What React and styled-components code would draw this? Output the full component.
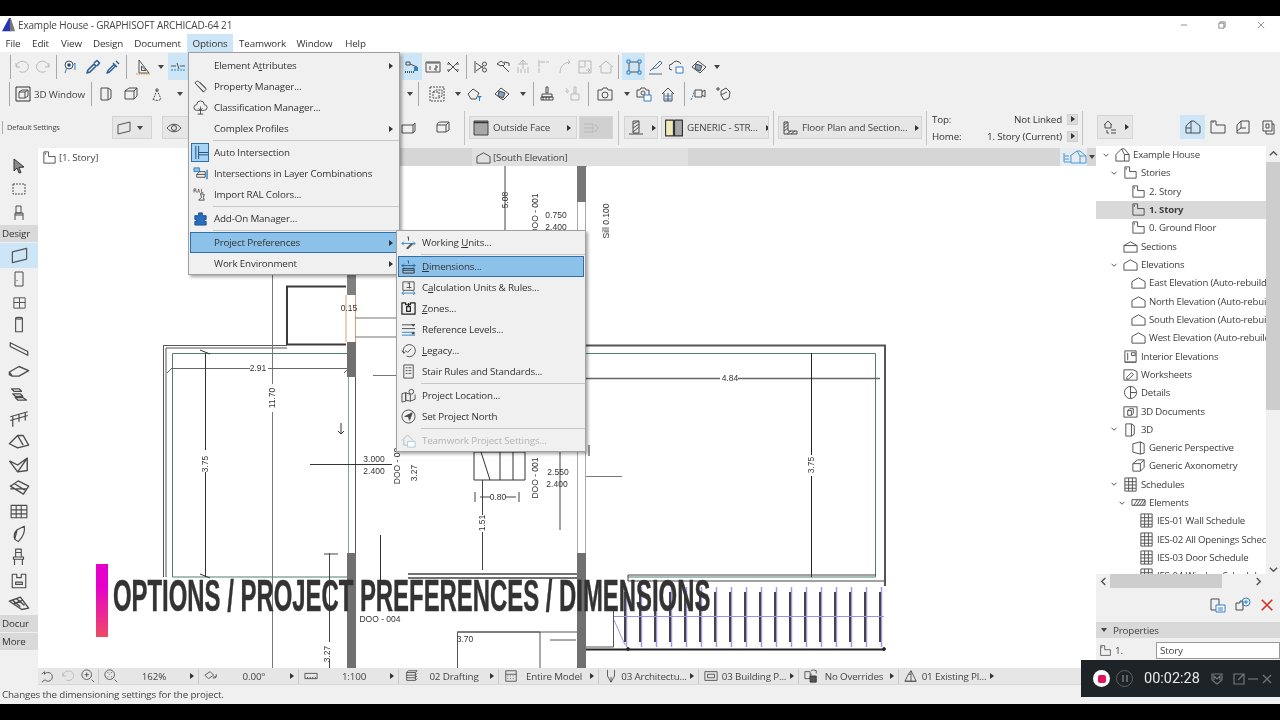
import React from 'react';
import styled, { createGlobalStyle } from 'styled-components';

const UI_FONT = '"Open Sans", "Noto Sans", sans-serif';
const BLUE = '#2f80c8';
const GRAY = '#b9b9b9';

const GlobalStyle = createGlobalStyle`
  html, body {
    margin: 0;
    background: #000;
    overflow: hidden;
  }
  * {
    box-sizing: border-box;
  }
`;

const Screen = styled.div`
  position: relative;
  width: 1280px;
  height: 720px;
  padding: 16px 0;
  background: #000;
  overflow: hidden;
  font-family: ${UI_FONT};
  font-size: 9.8px;
  letter-spacing: -0.16px;
  color: #333;
  filter: blur(0.3px);
`;

const Frame = styled.div`
  display: flex;
  flex-direction: column;
  height: 688px;
  background: #f0f0f0;
`;

const TitleBar = styled.div`
  display: flex;
  align-items: center;
  height: 18px;
  padding-left: 2px;
  background: #fff;
  font-size: 10px;
  color: #444;
`;

const TitleText = styled.span`
  margin-left: 2px;
  flex: 1;
`;

const WinButton = styled.span`
  display: flex;
  justify-content: center;
  width: 38.5px;
  color: #666;
`;

const MenuBar = styled.div`
  display: flex;
  height: 18px;
  background: #fff;
`;

const MenuLabel = styled.span`
  display: flex;
  align-items: center;
  width: ${(p) => p.$w}px;
  justify-content: center;
  background: ${(p) => (p.$open ? '#cde6f7' : 'transparent')};
  color: #333;
`;

const ToolRow = styled.div`
  display: flex;
  align-items: center;
  flex: none;
  height: ${(p) => p.$h}px;
  padding-left: ${(p) => p.$pad}px;
`;

const Tool = styled.span`
  display: flex;
  align-items: center;
  justify-content: center;
  flex: none;
  width: ${(p) => p.$w}px;
  height: ${(p) => (p.$hl ? '27px' : 'auto')};
  background: ${(p) => (p.$hl ? '#cde6f7' : 'transparent')};
`;

const Sep = styled.span`
  flex: none;
  width: ${(p) => p.$w}px;
  height: 24px;
  background: linear-gradient(#a8a8a8, #a8a8a8) center / 1px 100% no-repeat;
`;

const Caret = styled.span`
  flex: none;
  display: flex;
  justify-content: center;
  width: ${(p) => p.$w}px;
  &::after {
    content: '';
    border-left: 3px solid transparent;
    border-right: 3px solid transparent;
    border-top: 4px solid #444;
  }
`;

const Arrow = styled.span`
  flex: none;
  width: 0;
  height: 0;
  border-top: 3.5px solid transparent;
  border-bottom: 3.5px solid transparent;
  border-left: 4px solid #333;
`;

const Body = styled.div`
  display: flex;
  flex: 1;
  min-height: 0;
`;

const LeftColumn = styled.div`
  display: flex;
  flex-direction: column;
  width: 1096px;
`;

const InfoBox = styled.div`
  display: flex;
  align-items: center;
  height: 41px;
  flex: none;
`;

const InfoLabel = styled.span`
  width: 110px;
  margin-left: 2px;
  padding-left: 4px;
  border-left: 1px solid #aaa;
  font-size: 7.5px;
  line-height: 13px;
  color: #444;
`;

const InfoSep = styled.span`
  flex: none;
  width: 1px;
  height: 34px;
  margin: 0 ${(p) => p.$m}px;
  background: #c4c4c4;
`;

const InfoButton = styled.span`
  display: flex;
  align-items: center;
  gap: 4px;
  flex: none;
  width: ${(p) => p.$w}px;
  height: 23px;
  margin-right: ${(p) => p.$mr || 0}px;
  padding: 0 5px 0 3px;
  border: 1px solid #d4d4d4;
  background: ${(p) => (p.$off ? '#d0d0d0' : '#e6e6e6')};
  white-space: nowrap;
  overflow: hidden;
  color: #444;
`;

const Grow = styled.span`
  flex: 1;
`;

const InfoSpacer = styled.span`
  flex: none;
  display: flex;
  align-items: center;
  justify-content: flex-end;
  width: ${(p) => p.$w}px;
`;

const StoryBlock = styled.div`
  display: grid;
  grid-template-columns: 40px 95px 11px;
  row-gap: 4px;
  align-items: center;
  width: 147px;
  flex: none;
  padding-left: 1px;
`;

const StoryValue = styled.span`
  text-align: right;
  padding-right: 5px;
  white-space: nowrap;
`;

const SmallBox = styled.span`
  display: flex;
  align-items: center;
  justify-content: center;
  width: 11px;
  height: 11px;
  background: #dcdcdc;
  border: 1px solid #cfcfcf;
`;

const TabBar = styled.div`
  display: flex;
  height: 18px;
  flex: none;
  background: #d6d6d6;
`;

const Tab = styled.div`
  display: flex;
  align-items: center;
  gap: 2px;
  width: ${(p) => p.$w}px;
  padding-left: ${(p) => p.$pad || 0}px;
  background: ${(p) => p.$bg};
  color: #444;
`;

const TabTools = styled.div`
  display: flex;
  align-items: center;
  justify-content: center;
  gap: 2px;
  margin-left: auto;
  width: 36px;
  padding-left: 2px;
  background: linear-gradient(90deg, #e6ecf2 75%, #d6d6d6 75%);
`;

const MapGlyph = styled.svg`
  display: block;
  flex: none;
  width: 24px;
  height: 14px;
  fill: none;
  stroke: #4a98d6;
`;

const Workspace = styled.div`
  display: flex;
  flex: 1;
  min-height: 0;
`;

const Toolbox = styled.div`
  display: flex;
  flex-direction: column;
  flex: none;
  width: 38px;
  padding-top: 6px;
`;

const ToolSlot = styled.span`
  display: flex;
  align-items: center;
  justify-content: center;
  flex: none;
  height: ${(p) => p.$h}px;
  background: ${(p) => (p.$hl ? '#cde6f7' : 'transparent')};
`;

const GroupLabel = styled.span`
  display: flex;
  align-items: center;
  flex: none;
  height: 17px;
  margin-bottom: 1px;
  padding-left: 2px;
  background: #d9d9d9;
  overflow: hidden;
  white-space: nowrap;
  color: #333;
`;

const CanvasColumn = styled.div`
  display: flex;
  flex-direction: column;
  flex: 1;
  min-width: 0;
`;

const Canvas = styled.div`
  flex: 1;
  min-height: 0;
  background: #fff;
  & > svg {
    display: block;
  }
`;

const ViewBar = styled.div`
  display: flex;
  align-items: center;
  flex: none;
  height: 17px;
  background: #e6e6e6;
  border-bottom: 1px solid #d8d8d8;
`;

const ViewTools = styled.div`
  display: flex;
  align-items: center;
  justify-content: space-around;
  flex: none;
  width: 60px;
`;

const ViewItem = styled.div`
  display: flex;
  align-items: center;
  justify-content: space-between;
  flex: none;
  width: 100px;
  height: 15px;
  padding: 0 4px 0 5px;
  border-left: 1px solid #c8c8c8;
  white-space: nowrap;
  color: #444;
`;

const ViewValue = styled.span`
  flex: 1;
  text-align: center;
`;

const HintBar = styled.div`
  display: flex;
  align-items: center;
  flex: none;
  height: 19px;
  padding-left: 2px;
  color: #444;
`;

const RightPanel = styled.div`
  display: flex;
  flex-direction: column;
  width: 184px;
  flex: none;
`;

const PanelTabs = styled.div`
  display: flex;
  align-items: center;
  height: 39px;
  flex: none;
  padding: 0 0 0 1px;
`;

const MapButton = styled.span`
  display: flex;
  align-items: center;
  justify-content: center;
  gap: 7px;
  width: 36px;
  height: 24px;
  margin-right: 47px;
  background: #e6e6e6;
  border: 1px solid #d6d6d6;
`;

const PanelTab = styled.span`
  display: flex;
  align-items: center;
  justify-content: center;
  width: 25px;
  height: 24px;
  background: ${(p) => (p.$hl ? '#cde6f7' : 'transparent')};
`;

const TreeArea = styled.div`
  display: flex;
  height: 428px;
  flex: none;
`;

const Tree = styled.div`
  width: 170px;
  flex: none;
  background: #fff;
  overflow: hidden;
  font-size: 9.6px;
  letter-spacing: -0.2px;
`;

const TreeRow = styled.div`
  display: flex;
  align-items: center;
  height: 18.32px;
  padding-left: ${(p) => 5 + p.$level * 8}px;
  padding-bottom: 1px;
  background: ${(p) => (p.$selected ? '#d9d9d9' : 'transparent')};
  font-weight: ${(p) => (p.$selected ? 700 : 400)};
  white-space: nowrap;
  color: #3d3d3d;
`;

const Chevron = styled.span`
  display: flex;
  flex: none;
  width: 10px;
  color: #444;
`;

const TreeIcon = styled.span`
  display: flex;
  align-items: center;
  justify-content: center;
  flex: none;
  width: 22px;
`;

const VScroll = styled.div`
  display: flex;
  flex-direction: column;
  align-items: center;
  width: 14px;
  flex: none;
  padding-top: 3px;
`;

const VThumb = styled.div`
  width: 14px;
  height: 248px;
  margin: 4px 0 auto;
  background: #cdcdcd;
`;

const ScrollGlyph = styled.svg`
  display: block;
  flex: none;
  width: 9px;
  height: 9px;
  fill: none;
  stroke: #555;
  stroke-width: 1.6;
`;

const HScroll = styled.div`
  display: flex;
  align-items: center;
  width: 170px;
  height: 14px;
  flex: none;
  padding: 0 3px;
`;

const HThumb = styled.div`
  width: 112px;
  height: 14px;
  margin: 0 auto 0 2px;
  background: #cdcdcd;
`;

const PanelActions = styled.div`
  display: flex;
  align-items: center;
  justify-content: flex-end;
  gap: 9px;
  height: 34px;
  flex: none;
  padding-right: 6px;
`;

const PanelHeader = styled.div`
  display: flex;
  align-items: center;
  gap: 6px;
  height: 16px;
  flex: none;
  padding-left: 5px;
  background: #d9d9d9;
  color: #444;
`;

const PropertyRow = styled.div`
  display: flex;
  align-items: center;
  height: 20px;
  margin-top: 2px;
  flex: none;
  padding-left: 3px;
  color: #444;
`;

const PropertyIndex = styled.span`
  width: 44px;
  padding-left: 3px;
`;

const PropertyInput = styled.span`
  display: flex;
  align-items: center;
  width: 124px;
  height: 17px;
  padding-left: 3px;
  background: #fff;
  border: 1px solid #9a9a9a;
`;

const DropMenu = styled.div`
  position: absolute;
  left: ${(p) => p.$x}px;
  top: ${(p) => p.$y}px;
  width: ${(p) => p.$w}px;
  padding-top: ${(p) => p.$top}px;
  background: #f0f0f0;
  border: 1px solid #a0a0a0;
  box-shadow: 2px 2px 3px rgba(0, 0, 0, 0.35);
  color: #333;
`;

const MenuRow = styled.div`
  display: flex;
  align-items: center;
  height: 21px;
  margin: 0 1px;
  padding-right: 4px;
  border: 1px solid ${(p) => (p.$hl ? '#2f6fa8' : 'transparent')};
  background: ${(p) => (p.$hl ? '#8cc2ea' : 'transparent')};
  color: ${(p) => (p.$off ? '#b4b4b4' : '#333')};
`;

const MenuIcon = styled.span`
  display: flex;
  align-items: center;
  justify-content: center;
  flex: none;
  width: 18px;
  height: 19px;
  margin-right: 5px;
  background: ${(p) => (p.$on ? '#a9d3f2' : 'transparent')};
  border: 1px solid ${(p) => (p.$on ? '#2f6fa8' : 'transparent')};
`;

const MenuText = styled.span`
  flex: 1;
  white-space: nowrap;
`;

const MenuRule = styled.div`
  height: 3px;
  margin-left: 24px;
  background: linear-gradient(#c6c6c6, #c6c6c6) center / 100% 1px no-repeat;
`;

const CaptionBar = styled.div`
  position: absolute;
  left: 96px;
  top: 564px;
  width: 12px;
  height: 73px;
  background: linear-gradient(#e600cc 30%, #ee4a66);
`;

const CaptionText = styled.div`
  position: absolute;
  left: 113px;
  top: 578px;
  font-family: "Liberation Sans", sans-serif;
  font-weight: 700;
  font-size: 44px;
  line-height: 36px;
  letter-spacing: 0;
  color: #333;
  white-space: nowrap;
  -webkit-text-stroke: 0.5px #333;
  transform: scaleX(0.543);
  transform-origin: left center;
`;

const Recorder = styled.div`
  position: absolute;
  left: 1081px;
  top: 660px;
  display: flex;
  align-items: center;
  width: 199px;
  height: 37px;
  padding-left: 12px;
  background: #1e2327;
`;

const RecordDot = styled.span`
  display: flex;
  align-items: center;
  justify-content: center;
  flex: none;
  width: 17px;
  height: 17px;
  border-radius: 50%;
  background: #fff;
  &::after {
    content: '';
    width: 8px;
    height: 8px;
    border-radius: 2px;
    background: #e0145a;
  }
`;

const PauseDot = styled.span`
  display: flex;
  align-items: center;
  justify-content: center;
  gap: 2px;
  flex: none;
  width: 17px;
  height: 17px;
  margin-left: 6px;
  border-radius: 50%;
  border: 1.5px solid #5b6268;
  &::before,
  &::after {
    content: '';
    width: 2px;
    height: 7px;
    background: #5b6268;
  }
`;

const RecorderTime = styled.span`
  margin-left: 11px;
  font-family: Roboto, sans-serif;
  font-size: 14.5px;
  letter-spacing: 0;
  color: #e8e8e8;
`;

const RecorderIcons = styled.span`
  display: flex;
  align-items: center;
  margin-left: ${(p) => p.$ml}px;
  & svg {
    display: block;
    fill: none;
    stroke: #6f767c;
    stroke-width: 1.2;
  }
`;

const IconSvg = styled.svg`
  display: block;
  flex: none;
  width: ${(p) => p.$size}px;
  height: ${(p) => p.$size}px;
  fill: none;
  stroke: #4d4d4d;
  stroke-width: 1;
  stroke-linejoin: round;
`;

const ICONS = {
  undo: <path stroke={GRAY} d="M2 4v4h4M2.500 8a6 5.500 0 1 1 3 4.500" />,
  redo: <path stroke={GRAY} d="M14 4v4h-4M13.500 8a6 5.500 0 1 0-3 4.500" />,
  find: (
    <>
      <circle cx="6" cy="6" r="4" />
      <circle cx="6" cy="6" r="1.800" fill="#1c4e80" stroke="none" />
      <path d="M3.500 9.500L2 14M12 4v7M10.500 5.500L12 4" stroke={BLUE} />
    </>
  ),
  eyedrop: <path stroke="#2a5f93" strokeWidth="1.600" d="M2 14l1-3 6-6 2 2-6 6zM9 4l3-2.500 2.500 2.500L12 7" />,
  syringe: <path stroke="#2a5f93" strokeWidth="1.400" d="M2 14l2.500-1 6-6-1.500-1.500-6 6zM8 4l4 4M11 2l3 3" />,
  setsquare: (
    <>
      <path d="M4 1v13h10z" stroke="#555" />
      <path d="M6.500 7v4.500H11z" />
      <path d="M1 15h14" stroke="#d9892c" strokeDasharray="1.500 1" />
    </>
  ),
  guide: (
    <>
      <path d="M1 7h5M10 7h5" stroke="#555" />
      <path d="M7 4l2 6" />
      <path d="M1 11h14" stroke={BLUE} strokeDasharray="2 1" />
    </>
  ),
  snap: (
    <>
      <path d="M2 3h4v3H2zM6 5l7 3" />
      <path d="M1 13h10" strokeWidth="2" strokeDasharray="1 1" />
      <rect x="10" y="8" width="4" height="4" fill={BLUE} stroke="none" />
    </>
  ),
  ruler12: (
    <>
      <rect x="1" y="3" width="14" height="10" />
      <path d="M3 3v2M5 3v2M7 3v2M9 3v2M11 3v2M13 3v2" />
      <path d="M5 7v4M10 7h2v2h-2v2h2" />
    </>
  ),
  xcross: <path d="M3 3l10 10M13 3L3 13M2 5h3M11 5h3M2 11h3M11 11h3" />,
  scissors: (
    <>
      <circle cx="11.500" cy="5" r="2" />
      <circle cx="11.500" cy="11" r="2" />
      <path d="M2 2v12M3 4l7 5M3 12l7-5" />
    </>
  ),
  hammer: <path d="M2 5l4-3 4 3-2 2-1-1-1 1zM8 7l6 6M9 3l5 1v3" />,
  trim: <path stroke={GRAY} d="M8 1v9M5 4l3-3 3 3M3 14V8M6 14V10M10 14V10M13 14V8M3 5h10" />,
  corner: <path stroke={GRAY} d="M3 14V3h10M3 1v3M6 3h1" strokeDasharray="5 1" />,
  curve: <path stroke={GRAY} d="M3 14C3 8 6 4 13 3M11 1l2 2-2 2" />,
  boxarrow: <path stroke={GRAY} d="M2 2h12v12H2zM2 8h6V2M9 11h4M11 9l2 2-2 2" />,
  house: <path stroke={GRAY} d="M1 8l7-6 7 6M3 7v7h10V7" />,
  selection: (
    <>
      <path d="M3 3h10v10H3z" stroke="#555" />
      <path d="M1 1h3v3H1zM12 1h3v3h-3zM1 12h3v3H1zM12 12h3v3h-3z" fill="#cde6f7" stroke={BLUE} />
    </>
  ),
  pencil: <path d="M2 12c3-4 6-1 9-5l3-3-2-2-7 7zM1 15h13" stroke="#476b8e" />,
  cloud: (
    <>
      <path d="M3 11a3 3 0 0 1 0-6 5 5 0 0 1 9 0" />
      <rect x="7" y="8" width="7" height="6" fill="#fff" stroke={BLUE} />
    </>
  ),
  diamond: (
    <>
      <path d="M1 8l6-6 8 6-6 6z" />
      <path d="M5 5l6 2-2 5-5-2z" fill="#7f9fbf" />
    </>
  ),
  windowBox: (
    <>
      <rect x="1" y="1" width="14" height="14" stroke="#333" />
      <path d="M4 6l3-2h6v6l-3 2H4zM4 6h6v6M10 6l3-2" />
    </>
  ),
  boxFront: <path d="M3 2h7l3 2v8l-3 2H3zM10 2v12" />,
  cube: <path d="M2 5l4-3h8v8l-3 3H2zM2 5h9v8M11 5l3-3" />,
  figure: <path d="M8 2v2M6 4h4M8 4l-4 10M8 4l4 9M4 13c2 2 6 2 8 0" strokeDasharray="2 1" />,
  dashCube: <path d="M1 1h14v14H1zM4 6l3-2h6v6l-3 2H4zM4 6h6v6" strokeDasharray="2 1" />,
  gem: (
    <>
      <path d="M1 8l5-5 6 4-3 6H4z" />
      <path d="M10 10h5l-2 2v3h-1v-3z" fill={BLUE} stroke="none" />
    </>
  ),
  brush: <path d="M7 1h2v6H7zM3 8h10v3H3zM2 11h12v3H2zM4 11v3M7 11v3M10 11v3" />,
  brushOff: <path stroke={GRAY} d="M10 1h2v6h-2zM7 8h8v6H7zM2 2c1 2 3 2 2 4s-2 0-2-2" />,
  camera: (
    <>
      <path d="M1 4h4l1-2h4l1 2h4v10H1z" />
      <circle cx="8" cy="9" r="3" />
    </>
  ),
  camFile: (
    <>
      <path d="M1 4h3l1-2h4l1 2h3v7H1z" />
      <circle cx="7" cy="7" r="2" />
      <rect x="8" y="9" width="7" height="6" fill="#fff" stroke={BLUE} />
    </>
  ),
  houseGrid: (
    <>
      <path d="M2 8l6-6 6 6M4 7v8h8V7M8 7v8" />
      <path d="M5 10h6M5 13h6" stroke={BLUE} />
    </>
  ),
  video: (
    <>
      <path d="M5 4h7v7H5zM12 6l3-2v7l-3-2" />
      <path d="M1 14c2-4 3-7 3-9" stroke={BLUE} strokeDasharray="2 1" />
    </>
  ),
  spark: <path d="M3 1v4M1 3h4M6 5l5-3 4 4-1 6-5 2-3-5zM6 9l6-3" />,
  wallTool: <path stroke="#555" d="M2 5l12-3v9L2 14z" />,
  eye: (
    <>
      <path d="M1 8c4-5 10-5 14 0-4 5-10 5-14 0z" />
      <circle cx="8" cy="8" r="2.500" />
    </>
  ),
  slabBox: <path d="M2 5h11l2-2v8l-2 2H2zM13 5v8" />,
  profileBox: <path d="M2 5c0-2 2-3 4-3h8v8l-3 2H2zM2 5h9v7M11 5l3-3" />,
  hatch: (
    <>
      <rect x="1" y="1" width="14" height="14" fill="#a8a8a8" stroke="#444" />
      <path d="M1 2.500h14" stroke="#333" strokeWidth="1.500" />
    </>
  ),
  arrowBox: <path stroke={GRAY} d="M1 4h9M1 8h9M1 12h9M10 4v8M12 4l3 4-3 4" />,
  wallSection: <path d="M5 1h6v12H5zM5 4l6-3M5 8l6-4M5 12l6-5M1 14h14" />,
  wallPair: (
    <>
      <rect x="0.500" y="1" width="7" height="14" fill="#f2e7b8" stroke="#333" />
      <rect x="8.500" y="1" width="7" height="14" fill="#a8a8a8" stroke="#333" />
    </>
  ),
  floorHatch: <path d="M2 2h4v9h9v3H2zM2 5l4-3M2 8l4-3M2 11l4-3M5 14l4-3M9 14l4-3" />,
  mapTree: <path d="M2 6l4-4 4 4M3 5v4h6V5M5 11v3h2M9 11h5M9 14h5" />,
  houseTab: <path d="M1 14V7l5-5h3l6 5v7zM6 2v12M1 9h5" />,
  storyTab: <path d="M1 2h5v4h9v8H1zM2 3h2" />,
  layoutTab: <path d="M6 2h8v12H2V6zM6 2v7l-4 3M6 9h5" />,
  pubTab: <path d="M3 2h9v10H3zM12 5h2v10H6v-3M6 5h3v4H6z" />,
  house3d: <path d="M1 15V8l6-6h3l5 6v7zM7 2l3 6v7M10 8h5" />,
  story: <path d="M2 2h5v5h7v7H2zM3.500 3v2" />,
  section: <path d="M1 7l7-4 7 4v7H1zM1 7h14" />,
  elevation: <path d="M1 7l7-4 7 4v7H1z" />,
  intElev: <path d="M2 2h12v12H2zM5 4v8M9 4v3h4V4zM2 14h12" />,
  sheet: <path d="M1 3h10l4 2v9H1zM4 11l5-5 2 2-5 5H4z" />,
  detail: (
    <>
      <circle cx="8" cy="8" r="6.500" />
      <path d="M8 1.500V14M8 8h6" />
    </>
  ),
  doc3d: <path d="M1 3h14v11H1zM5 7l2-2h4v5l-2 2H5zM5 7h4v5" />,
  box3d: <path d="M3 2h6l3 2v9l-3 2H3zM9 2v13" />,
  persp: <path d="M2 4l8-2 4 2v10l-4 1-8-2zM10 2v13" />,
  axon: <path d="M2 6l5-4h7v8l-4 4H2zM2 6h8v8M10 6l4-4" />,
  grid: <path d="M2 1h12v14H2zM2 5h12M2 8.500h12M2 12h12M6 1v14M10 1v14" />,
  hatchBar: <path d="M1 5h14v6H1zM3 11l4-6M6 11l4-6M9 11l4-6M12 11l3-5" />,
  tag: <path d="M2 4l3-2 9 9-3 3zM4 6l8 8M7 3l7 7" />,
  tree: <path d="M4 11a3 3 0 0 1 0-6 4 4 0 0 1 8 0 3 3 0 0 1 0 6zM8 15V7M6 9l2 2 2-2M5 15h6" />,
  autoInt: <path stroke="#1c4e80" d="M3 1v14M6 1v14M6 8h10M6 10.500h10" />,
  layerInt: (
    <>
      <path d="M1 2h6v4H1z" fill="#8fbde3" stroke={BLUE} />
      <path d="M4 9l3-3h6v6H4zM4 9h9" />
      <path d="M15 4v10" stroke={BLUE} strokeWidth="1.500" />
    </>
  ),
  ral: (
    <>
      <path d="M8 7l1 4-3 3h6l-1-3 1-3z" />
      <path d="M1 2v4M1 2h2v2H1M3 4l1 2M5 6l1-4 1 4M9 2v4h2" strokeWidth="0.800" />
    </>
  ),
  addon: <path fill="#2a6ec0" stroke="#1c4e80" d="M2 5h4V2h4v3h4v4h-2v2h2v4H2v-4h2V9H2z" />,
  workUnits: (
    <>
      <path d="M1 9h14M3 7l-2 2 2 2M13 7l2 2-2 2" stroke={BLUE} />
      <path d="M7 2h1v4M6 14l5-5 1 1-5 5z" fill="#555" />
    </>
  ),
  dims: (
    <>
      <path d="M7 2h1v3M1 7h14M3 5l-2 2 2 2M13 5l2 2-2 2" stroke="#1c5f99" />
      <path d="M2 10h12v5H2zM2 12h12" stroke="#333" />
    </>
  ),
  calc: (
    <>
      <path d="M2 2h12v9H2zM7 4l2-1v6M6 8h5" />
      <path d="M1 14h14M3 12l-2 2 2 2M13 12l2 2-2 2" stroke={BLUE} />
    </>
  ),
  zones: <path strokeWidth="1.300" stroke="#222" d="M1 2h4v2h5V2h5v12H1zM6 6h4v5H6zM8 2v4" />,
  levels: (
    <>
      <path d="M1 3h14M1 7h14" />
      <path d="M1 11h14M1 14h14" stroke={BLUE} />
      <path d="M11 2l2 3 2-3zM11 13l2-3 2 3z" fill="#444" stroke="none" />
    </>
  ),
  legacy: <path d="M3 11A6.500 6.500 0 1 1 6 14M1 8l2 3 2-2M5 8l2 2 4-4" />,
  stairRules: <path d="M3 1h10v14H3zM5 4h2M5 7h2M5 10h2M8 4h3M8 7h3M8 10h3" />,
  location: (
    <>
      <path d="M1 6l4-1v9l-4 1zM5 5l5 2v7l-5-1zM10 14l5-2V7" />
      <circle cx="11" cy="4" r="2.500" />
    </>
  ),
  north: (
    <>
      <circle cx="8" cy="8" r="7" />
      <path d="M4 8l8-4-3 8-1-4z" fill="#444" />
    </>
  ),
  teamHouse: (
    <>
      <path stroke={GRAY} d="M1 8l6-6 6 6M3 7v6h6" />
      <rect x="7" y="9" width="8" height="6" stroke="#a9cbe6" fill="#fff" />
    </>
  ),
  cursor: <path fill="#8a8a8a" stroke="#333" d="M3 1l10 8-5 .5 2 5-2 .500-2-5-3 3z" />,
  marquee: <rect x="2" y="3" width="12" height="10" strokeDasharray="2 1" />,
  chair: <path d="M5 1h5v7H5zM4 8h8v2H4zM4 10v5M12 10v5" />,
  door: <path d="M4 1h8v14H4zM6 9v1" />,
  win: <path d="M2 3h12v11H2zM8 3v11M2 8h12" />,
  column: <path d="M5 2c0-1 6-1 6 0v12H5zM5 2c0 1 6 1 6 0" />,
  beam: <path d="M1 3l14 7v3L1 6z" />,
  slab: <path d="M1 8l7-4 7 3-7 4-5 0zM1 8v2l2 1" />,
  stair: <path d="M2 3h6l2 2H4zM3 7h6l2 2H5zM5 10h6l3 2H7z" />,
  railing: <path d="M1 7l14-4M1 10l14-4M3 7v8M8 5v6M13 4v6" />,
  roof: <path d="M1 10l6-6h4l4 7-8 2zM7 4l4 7" />,
  shell: <path d="M1 5l6 8 7-10v9l-7 1M1 5l6 3 7-5" />,
  skylight: <path d="M1 7l6-4 8 4-4 6zM1 9h13M4 5l8 5" />,
  curtain: <path d="M1 3h14v11H1zM1 7h14M1 10.500h14M5.500 3v11M10 3v11" />,
  morph: <path d="M4 12l2-8 6-3c1 5-1 9-5 13zM6 4c-2 2-3 5-2 8" />,
  object: <path d="M5 1h5v7H5zM3 8h9v2H3zM4 10v5M11 10v5M5 4h5" />,
  zone: <path d="M2 2h4v3h4V2h4v12H2zM5 9h6v2H5z" />,
  mesh: <path d="M1 6l8-3 6 8-5 1zM3 5l6 5M6 4l6 5M4 8l7-3" />,
  undoView: <path d="M1 6l3-3v3h0M4 6a5 5 0 1 1 1 7M1 15l4-3" />,
  zoomIn: <path d="M12 12l3 3M6.500 1a5.500 5.500 0 1 0 .01 0zM4 6.500h5M6.500 4v5" />,
  fit: <path d="M12 12l3 3M6.500 1a5.500 5.500 0 1 0 .01 0zM4 4h1M8 4h1M4 9h1M8 9h1M6 6h1" />,
  rotate: <path d="M1 7l6-4 4 4-6 4zM10 10a3 3 0 0 0 4-1M14 6v3h-3" />,
  scale: <path d="M1 5h14v6H1zM4 9v2M7 9v2M10 9v2M13 9v2" />,
  layers: <path d="M3 4h10l2-2H5zM3 7h10l2-2M3 10h10l2-2M3 13h10l2-2M3 4v9M13 4v9" />,
  partial: <path d="M2 2h12v12H2zM2 6h12M4 8h1M7 8h1M10 8h1M4 11h1M7 11h1M10 11h1" />,
  pen: <path d="M4 1v7l4 7 4-7V1M8 9v6" />,
  rect: <path d="M1 3h14v10H1zM4 6h8v4H4z" />,
  override: (
    <>
      <path d="M1 3h6v8H1zM7 6h2" />
      <path d="M8 2l3-1 3 1v3" />
      <rect x="7" y="8" width="7" height="7" fill="#555" stroke="#333" />
    </>
  ),
  reno: <path d="M1 14l4-8 3-4 6 12zM8 2v12M5 6h3M1 14h13" />,
  sheetBlue: (
    <>
      <path d="M1 2h8v11H1z" />
      <rect x="6" y="8" width="9" height="7" fill="#fff" stroke={BLUE} />
      <path d="M8 11h5M8 13h5" stroke={BLUE} />
    </>
  ),
  addStory: (
    <>
      <path d="M1 6h4V4h3v9H1z" />
      <circle cx="11" cy="5" r="4" stroke={BLUE} />
      <path d="M9 5h4M11 3v4" stroke={BLUE} />
    </>
  ),
  redX: <path stroke="#d8332a" strokeWidth="2" d="M2 2l12 12M14 2L2 14" />,
  logo: (
    <>
      <path d="M0 15L8 0h2v15z" fill="#2632b8" stroke="none" />
      <path d="M9 0h1l5 15H9z" fill="#777" stroke="none" />
    </>
  ),
  winMin: <path d="M3 8h10" />,
  winMax: <path d="M3 5h8v8H3zM5 5V3h8v8h-2" />,
  winClose: <path d="M3 3l10 10M13 3L3 13" />,
  chevDown: <path strokeWidth="1.500" d="M4 6l4 4 4-4" />,
};

const Icon = ({ name, size = 16 }) => (
  <IconSvg viewBox="0 0 16 16" $size={size}>
    {ICONS[name]}
  </IconSvg>
);

// [kind or icon name, width, highlighted]
const ROW_ONE = [
  ['sep', 4], ['undo', 20], ['redo', 22], ['sep', 5], ['find', 24], ['eyedrop', 19], ['syringe', 22],
  ['sep', 4], ['setsquare', 30], ['caret', 6], ['gap', 4], ['guide', 20, true], ['gap', 214],
  ['snap', 20, true], ['ruler12', 21], ['xcross', 20], ['sep', 6], ['scissors', 24], ['hammer', 20],
  ['trim', 20], ['corner', 22], ['curve', 19], ['boxarrow', 21], ['house', 21], ['sep', 4], ['gap', 2],
  ['selection', 23, true], ['pencil', 21], ['cloud', 22], ['diamond', 22], ['caret', 14],
];

const ROW_TWO = [
  ['sep', 4], ['3d', 78], ['sep', 4], ['boxFront', 25], ['cube', 25], ['figure', 28], ['caret', 18], ['gap', 215],
  ['caret', 12], ['sep', 4], ['dashCube', 34], ['caret', 8], ['gem', 26], ['diamond', 28], ['caret', 14],
  ['sep', 6], ['brush', 22], ['brushOff', 28], ['sep', 4], ['camera', 30], ['caret', 14], ['camFile', 20],
  ['houseGrid', 28], ['sep', 4], ['video', 24], ['spark', 26],
];

const ThreeDLabel = styled.span`
  display: flex;
  align-items: center;
  gap: 3px;
  color: #444;
`;

const renderTool = ([kind, w, hl], i) => {
  if (kind === 'sep') return <Sep key={i} $w={w} />;
  if (kind === 'caret') return <Caret key={i} $w={w} />;
  if (kind === 'gap') return <Tool key={i} $w={w} />;
  if (kind === '3d') {
    return (
      <Tool key={i} $w={w}>
        <ThreeDLabel>
          <Icon name="windowBox" />3D Window
        </ThreeDLabel>
      </Tool>
    );
  }
  return (
    <Tool key={i} $w={w} $hl={hl}>
      <Icon name={kind} />
    </Tool>
  );
};

const MAIN_MENU = [
  { label: ['Element A', 't', 'tributes'], arrow: true },
  { label: ['Property Manager...'], icon: 'tag' },
  { label: ['Classification Manager...'], icon: 'tree' },
  { label: ['Complex Profiles'], arrow: true },
  { rule: true },
  { label: ['Auto Intersection'], icon: 'autoInt', on: true },
  { label: ['Intersections in Layer Combinations'], icon: 'layerInt' },
  { label: ['Import RAL Colors...'], icon: 'ral' },
  { rule: true },
  { label: ['Add-On Manager...'], icon: 'addon' },
  { rule: true },
  { label: ['Project Preferences'], arrow: true, hl: true },
  { label: ['Work Environment'], arrow: true },
];

const SUB_MENU = [
  { label: ['Working ', 'U', 'nits...'], icon: 'workUnits' },
  { rule: true },
  { label: ['', 'D', 'imensions...'], icon: 'dims', hl: true },
  { label: ['C', 'a', 'lculation Units & Rules...'], icon: 'calc' },
  { label: ['', 'Z', 'ones...'], icon: 'zones' },
  { label: ['Reference Levels...'], icon: 'levels' },
  { label: ['', 'L', 'egacy...'], icon: 'legacy' },
  { label: ['Stair Rules and Standards...'], icon: 'stairRules' },
  { rule: true },
  { label: ['Project Location...'], icon: 'location' },
  { label: ['Set Project North'], icon: 'north' },
  { rule: true },
  { label: ['Teamwork Project Settings...'], icon: 'teamHouse', off: true },
];

const MenuEntries = ({ items }) =>
  items.map((item, i) =>
    item.rule ? (
      <MenuRule key={i} />
    ) : (
      <MenuRow key={i} $hl={item.hl} $off={item.off}>
        <MenuIcon $on={item.on}>{item.icon && <Icon name={item.icon} size={15} />}</MenuIcon>
        <MenuText>
          {item.label[0]}
          {item.label[1] && <u>{item.label[1]}</u>}
          {item.label[2]}
        </MenuText>
        {item.arrow && <Arrow />}
      </MenuRow>
    ),
  );

const TREE = [
  ['Example House', 0, 'house3d', true],
  ['Stories', 1, 'story', true],
  ['2. Story', 2, 'story'],
  ['1. Story', 2, 'story', false, true],
  ['0. Ground Floor', 2, 'story'],
  ['Sections', 1, 'section'],
  ['Elevations', 1, 'elevation', true],
  ['East Elevation (Auto-rebuild Model)', 2, 'elevation'],
  ['North Elevation (Auto-rebuild Model)', 2, 'elevation'],
  ['South Elevation (Auto-rebuild Model)', 2, 'elevation'],
  ['West Elevation (Auto-rebuild Model)', 2, 'elevation'],
  ['Interior Elevations', 1, 'intElev'],
  ['Worksheets', 1, 'sheet'],
  ['Details', 1, 'detail'],
  ['3D Documents', 1, 'doc3d'],
  ['3D', 1, 'box3d', true],
  ['Generic Perspective', 2, 'persp'],
  ['Generic Axonometry', 2, 'axon'],
  ['Schedules', 1, 'grid', true],
  ['Elements', 2, 'hatchBar', true],
  ['IES-01 Wall Schedule', 3, 'grid'],
  ['IES-02 All Openings Schedule', 3, 'grid'],
  ['IES-03 Door Schedule', 3, 'grid'],
  ['IES-04 Window Schedule', 3, 'grid'],
];

const TOOLBOX_TOP = ['cursor', 'marquee', 'chair'];
const TOOLBOX_DESIGN = [
  ['door', 16], ['win', 15], ['column', 18], ['beam', 20], ['slab', 22], ['stair', 20], ['railing', 20],
  ['roof', 22], ['shell', 22], ['skylight', 21], ['curtain', 18], ['morph', 19], ['object', 18], ['zone', 18], ['mesh', 22],
];

const VIEW_ITEMS = [
  ['fit', '162%'],
  ['rotate', '0.00°'],
  ['scale', '1:100'],
  ['layers', '02 Drafting'],
  ['partial', 'Entire Model'],
  ['pen', '03 Architectu...'],
  ['rect', '03 Building P...'],
  ['override', 'No Overrides'],
  ['reno', '01 Existing Pl...'],
];

const DimText = styled.text`
  font-family: "Liberation Sans", sans-serif;
  font-size: 8.5px;
  letter-spacing: 0;
  fill: #333;
  stroke: none;
`;

const Dim = ({ x, y, rotate, children }) => (
  <DimText x={x} y={y} textAnchor="middle" transform={rotate ? `rotate(-90 ${x} ${y})` : undefined}>
    {children}
  </DimText>
);

const Plan = () => {
  const treads = Array.from({ length: 18 }, (_, i) => 625 + i * 15);
  return (
    <svg width="1058" height="502" viewBox="38 166 1058 502" fill="none" stroke="#333">
      {/* left room */}
      <path d="M163.500 577V345.500H287M166 577V348H287" stroke="#555" />
      <path d="M172.500 577V353.500H348M172.500 577H348" stroke="#4f7f72" />
      <path d="M272.500 166V384M272.500 412V668" stroke="#777" />
      <path d="M287 345V286.500H346M287 344.500H346" stroke="#3a3a3a" strokeWidth="2" />
      <path d="M172 368.500H250M268 368.500H348M167 373l6-6M344 373l6-6" stroke="#666" />
      <path d="M205.500 353V450M205.500 472V577M200 350l10 4M200 574l10 4" />
      <rect x="347" y="166" width="9" height="129" fill="#808080" stroke="none" />
      <rect x="347" y="342" width="9" height="35" fill="#707070" stroke="none" />
      <rect x="347" y="553" width="9" height="115" fill="#707070" stroke="none" />
      <path d="M346 295V342M355.500 295V342" stroke="#e0a070" />
      <path d="M355 318H397M355 337H397M373 375.500H397" stroke="#777" />
      <path d="M348.500 377V553" stroke="#7aa598" />
      <path d="M355.500 377V553" stroke="#555" />
      <path d="M310 464.500H392M341 423V434M338 431l3 3 3-3" />
      <path d="M329.500 553V642M324 554H338M329.500 659V668" stroke="#444" />
      <path d="M380.500 535V590" />
      <Dim x={258} y={371}>2.91</Dim>
      <Dim x={275} y={398} rotate>11.70</Dim>
      <Dim x={208} y={464} rotate>3.75</Dim>
      <Dim x={349} y={311}>0.15</Dim>
      <Dim x={374} y={462}>3.000</Dim>
      <Dim x={374} y={474}>2.400</Dim>
      <Dim x={380} y={622}>DOO - 004</Dim>
      <Dim x={330} y={654} rotate>3.27</Dim>
      {/* centre */}
      <path d="M474 452H525V480H474zM481 452L490 480M500 452V480M513 452V480" />
      <path d="M480 497H490M505 497H516M475 492V502M519 492V502M482.500 480V515M482.500 532V570" stroke="#444" />
      <path d="M505 166V230M577 166H587M560 450V530" stroke="#444" />
      <rect x="577" y="166" width="9" height="36" fill="#777" stroke="none" />
      <rect x="577" y="553" width="9" height="115" fill="#707070" stroke="none" />
      <path d="M577.500 202V553M585.500 202V553" stroke="#aaa" />
      <path d="M586 476.500H622" stroke="#777" />
      <path d="M457.500 668V632H540V668M457 632H577M550 640L576 640" stroke="#555" />
      <path d="M408 574H577M408 578H577" stroke="#444" strokeWidth="1.500" />
      <path d="M589 445V456" />
      <Dim x={498} y={500}>0.80</Dim>
      <Dim x={485} y={523} rotate>1.51</Dim>
      <Dim x={400} y={466} rotate>DOO - 00</Dim>
      <Dim x={417} y={473} rotate>3.27</Dim>
      <Dim x={538} y={478} rotate>DOO - 001</Dim>
      <Dim x={558} y={475}>2.550</Dim>
      <Dim x={557} y={487}>2.400</Dim>
      <Dim x={508} y={200} rotate>5.08</Dim>
      <Dim x={538} y={214} rotate>DOO - 001</Dim>
      <Dim x={556} y={218}>0.750</Dim>
      <Dim x={556} y={230}>2.400</Dim>
      <Dim x={609} y={221} rotate>Sill 0.100</Dim>
      <Dim x={465} y={642}>3.70</Dim>
      {/* right room */}
      <path d="M586 345.500H885V586" stroke="#555" strokeWidth="2" />
      <path d="M586 353.500H875.500V577H628" stroke="#4f7f72" />
      <path d="M586 378.500H720M738 378.500H880" stroke="#666" strokeWidth="1.500" />
      <path d="M811.500 353V455M811.500 476V577" stroke="#222" />
      <path d="M628 575V581H884" stroke="#444" />
      <path d="M628 575H876" stroke="#444" />
      <Dim x={730} y={381}>4.84</Dim>
      <Dim x={814} y={465} rotate>3.75</Dim>
      {/* stair run */}
      {treads.map((x) => (
        <path key={x} d={`M${x + 1.5} 587V647`} stroke="#a498e6" strokeWidth="1.5" />
      ))}
      {treads.map((x) => (
        <path key={x} d={`M${x} 592V642`} stroke="#444" strokeWidth="2" />
      ))}
      <path d="M614 616.500H884" stroke="#9d90e0" />
      <path d="M625 645L614 620" stroke="#9d90e0" />
      <path d="M613.500 610V647H586" stroke="#555" />
      <path d="M586 649.500H884" stroke="#222" strokeWidth="2" />
      <circle cx="628" cy="649" r="1.500" fill="#222" />
      <circle cx="884" cy="649" r="1.500" fill="#222" />
    </svg>
  );
};

const App = () => (
  <Screen>
    <GlobalStyle />
    <Frame>
      <TitleBar>
        <Icon name="logo" size={14} />
        <TitleText>Example House - GRAPHISOFT ARCHICAD-64 21</TitleText>
        <WinButton><Icon name="winMin" size={10} /></WinButton>
        <WinButton><Icon name="winMax" size={10} /></WinButton>
        <WinButton><Icon name="winClose" size={10} /></WinButton>
      </TitleBar>
      <MenuBar>
        <MenuLabel $w={26}>File</MenuLabel>
        <MenuLabel $w={29}>Edit</MenuLabel>
        <MenuLabel $w={33}>View</MenuLabel>
        <MenuLabel $w={40}>Design</MenuLabel>
        <MenuLabel $w={59}>Document</MenuLabel>
        <MenuLabel $w={46} $open>Options</MenuLabel>
        <MenuLabel $w={59}>Teamwork</MenuLabel>
        <MenuLabel $w={45}>Window</MenuLabel>
        <MenuLabel $w={37}>Help</MenuLabel>
      </MenuBar>
      <ToolRow $h={29} $pad={8}>{ROW_ONE.map(renderTool)}</ToolRow>
      <ToolRow $h={26} $pad={7}>{ROW_TWO.map(renderTool)}</ToolRow>
      <Body>
        <LeftColumn>
          <InfoBox>
            <InfoLabel>Default Settings</InfoLabel>
            <InfoButton $w={40} $mr={10}>
              <Icon name="wallTool" />
              <Caret $w={8} />
            </InfoButton>
            <InfoButton $w={40}>
              <Icon name="eye" />
            </InfoButton>
            <InfoSpacer $w={267}>
              <Tool $w={36}><Icon name="slabBox" /></Tool>
              <Tool $w={34}><Icon name="profileBox" /></Tool>
              <InfoSep $m={4} />
            </InfoSpacer>
            <InfoButton $w={108} $mr={2}>
              <Icon name="hatch" />
              Outside Face
              <Grow />
              <Arrow />
            </InfoButton>
            <InfoButton $w={34} $off>
              <Icon name="arrowBox" />
            </InfoButton>
            <InfoSep $m={5} />
            <InfoButton $w={34} $mr={3}>
              <Icon name="wallSection" />
              <Grow />
              <Arrow />
            </InfoButton>
            <InfoButton $w={108}>
              <Icon name="wallPair" size={18} />
              GENERIC - STR...
              <Grow />
              <Arrow />
            </InfoButton>
            <InfoSep $m={4} />
            <InfoButton $w={144}>
              <Icon name="floorHatch" />
              Floor Plan and Section...
              <Grow />
              <Arrow />
            </InfoButton>
            <InfoSep $m={4} />
            <StoryBlock>
              <span>Top:</span>
              <StoryValue>Not Linked</StoryValue>
              <SmallBox><Arrow /></SmallBox>
              <span>Home:</span>
              <StoryValue>1. Story (Current)</StoryValue>
              <SmallBox><Arrow /></SmallBox>
            </StoryBlock>
            <InfoSep $m={4} />
          </InfoBox>
          <Workspace>
            <Toolbox>
              {TOOLBOX_TOP.map((name) => (
                <ToolSlot key={name} $h={23.5}>
                  <Icon name={name} />
                </ToolSlot>
              ))}
              <GroupLabel>Desigr</GroupLabel>
              <ToolSlot $h={25} $hl>
                <Icon name="wallTool" size={19} />
              </ToolSlot>
              {TOOLBOX_DESIGN.map(([name, size]) => (
                <ToolSlot key={name} $h={23.2}>
                  <Icon name={name} size={size} />
                </ToolSlot>
              ))}
              <GroupLabel>Docur</GroupLabel>
              <GroupLabel>More</GroupLabel>
            </Toolbox>
            <CanvasColumn>
              <TabBar>
                <Tab $w={262} $bg="#fff" $pad={4}>
                  <Icon name="story" size={15} />
                  [1. Story]
                </Tab>
                <Tab $w={172} $bg="#d6d6d6" />
                <Tab $w={216} $bg="#e0e0e0" $pad={4}>
                  <Icon name="elevation" size={15} />
                  [South Elevation]
                </Tab>
                <TabTools>
                  <MapGlyph viewBox="0 0 24 14">
                    <path d="M1 3v9h7M1 6h5M1 9h5M7 6l7-5h3l6 5v7H8V6M14 1l3 5v7M17 6h6" />
                  </MapGlyph>
                  <Caret $w={6} />
                </TabTools>
              </TabBar>
              <Canvas>
                <Plan />
              </Canvas>
              <ViewBar>
                <ViewTools>
                  <Icon name="undoView" size={14} />
                  <Icon name="undo" size={14} />
                  <Icon name="zoomIn" size={14} />
                </ViewTools>
                {VIEW_ITEMS.map(([icon, value]) => (
                  <ViewItem key={value}>
                    <Icon name={icon} size={14} />
                    <ViewValue>{value}</ViewValue>
                    <Arrow />
                  </ViewItem>
                ))}
              </ViewBar>
            </CanvasColumn>
          </Workspace>
        </LeftColumn>
        <RightPanel>
          <PanelTabs>
            <MapButton>
              <Icon name="mapTree" />
              <Arrow />
            </MapButton>
            <PanelTab $hl><Icon name="houseTab" /></PanelTab>
            <PanelTab><Icon name="storyTab" /></PanelTab>
            <PanelTab><Icon name="layoutTab" /></PanelTab>
            <PanelTab><Icon name="pubTab" /></PanelTab>
          </PanelTabs>
          <TreeArea>
            <Tree>
              {TREE.map(([label, level, icon, open, selected]) => (
                <TreeRow key={label} $level={level} $selected={selected}>
                  <Chevron>{open && <Icon name="chevDown" size={10} />}</Chevron>
                  <TreeIcon><Icon name={icon} size={15} /></TreeIcon>
                  {label}
                </TreeRow>
              ))}
            </Tree>
            <VScroll>
              <ScrollGlyph viewBox="0 0 10 10"><path d="M1 7l4-4 4 4" /></ScrollGlyph>
              <VThumb />
              <ScrollGlyph viewBox="0 0 10 10"><path d="M1 3l4 4 4-4" /></ScrollGlyph>
            </VScroll>
          </TreeArea>
          <HScroll>
            <ScrollGlyph viewBox="0 0 10 10"><path d="M7 1L3 5l4 4" /></ScrollGlyph>
            <HThumb />
            <ScrollGlyph viewBox="0 0 10 10"><path d="M3 1l4 4-4 4" /></ScrollGlyph>
          </HScroll>
          <PanelActions>
            <Icon name="sheetBlue" />
            <Icon name="addStory" />
            <Icon name="redX" size={14} />
          </PanelActions>
          <PanelHeader>
            <Caret $w={6} />
            Properties
          </PanelHeader>
          <PropertyRow>
            <Icon name="story" size={13} />
            <PropertyIndex>1.</PropertyIndex>
            <PropertyInput>Story</PropertyInput>
          </PropertyRow>
        </RightPanel>
      </Body>
      <HintBar>Changes the dimensioning settings for the project.</HintBar>
    </Frame>

    <DropMenu $x={188} $y={52} $w={212} $top={2}>
      <MenuEntries items={MAIN_MENU} />
    </DropMenu>
    <DropMenu $x={396} $y={230} $w={190} $top={1}>
      <MenuEntries items={SUB_MENU} />
    </DropMenu>

    <CaptionBar />
    <CaptionText>OPTIONS / PROJECT PREFERENCES / DIMENSIONS</CaptionText>

    <Recorder>
      <RecordDot />
      <PauseDot />
      <RecorderTime>00:02:28</RecorderTime>
      <RecorderIcons $ml={10}>
        <svg width="14" height="14" viewBox="0 0 14 14"><path d="M2 2h10v6l-5 4-5-4zM4 8V4l3 3 3-3v4" /></svg>
      </RecorderIcons>
      <RecorderIcons $ml={8}>
        <svg width="14" height="14" viewBox="0 0 14 14"><path d="M8 2H2v10h10V6M6 8l6-6M8 2h4v4" /></svg>
        <svg width="14" height="14" viewBox="0 0 14 14"><path d="M2 7h10" /></svg>
        <svg width="14" height="14" viewBox="0 0 14 14"><path d="M3 3l8 8M11 3l-8 8" /></svg>
      </RecorderIcons>
    </Recorder>
  </Screen>
);

export default App;
